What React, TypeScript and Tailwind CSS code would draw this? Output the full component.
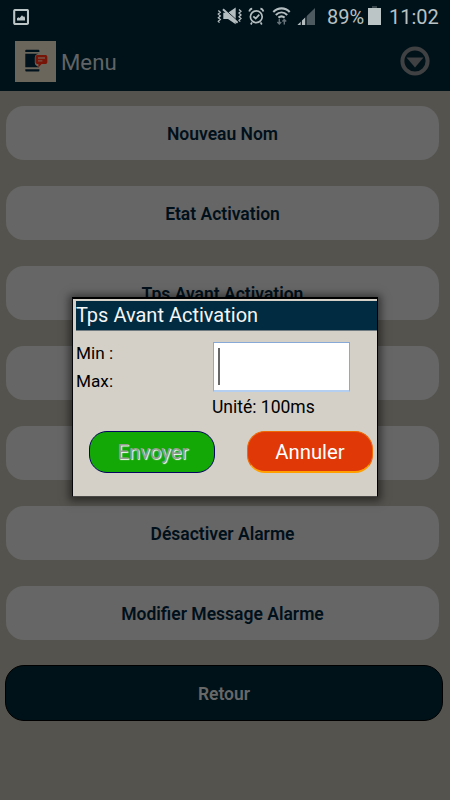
const menuItems = [
  "Nouveau Nom",
  "Etat Activation",
  "Tps Avant Activation",
  "",
  "",
  "Désactiver Alarme",
  "Modifier Message Alarme",
];

function PictureIcon() {
  return (
    <svg className="h-[17px] w-4" viewBox="0 0 16 17" fill="none">
      <rect x="1.2" y="1" width="13.8" height="14" rx="1" stroke="#bcc5c6" strokeWidth="2.1" />
      <path d="M4 11.500V9.300l1.400-1 1.200.8L9 6.300l1.300 1.500.9-.5.8 1.500v2.700z" fill="#bcc5c6" />
    </svg>
  );
}

function StatusIcons() {
  return (
    <svg className="h-[26px] w-[98px]" viewBox="217 4 98 26" fill="none">
      {/* vibrate / mute */}
      <g stroke="#b4bdbf" strokeWidth="1.3">
        <path d="M218.3 10.500l2 1.800-2 1.800 2 1.800-2 1.800 2 1.800-2 1.800 1.200 1.300" />
        <path d="M239 9.500l2 1.800-2 1.800 2 1.800-2 1.800 2 1.800-2 1.800 1.200 1.300" />
      </g>
      <path d="M223.300 12.800h4.700l7.700-5.200V24.200l-7.700-5.200h-4.700z" fill="#b4bdbf" />
      <path d="M224.200 8.700l14 12.800" stroke="#00121a" strokeWidth="1" />
      <path d="M223 9.300l14.600 13.400" stroke="#b4bdbf" strokeWidth="2" />
      {/* alarm */}
      <g stroke="#b4bdbf" strokeWidth="1.7">
        <circle cx="256.3" cy="16.800" r="5.900" />
        <path d="M253.300 16.300l2.400 2.200 3.600-3.800M249.200 11.500c.4-1.700 1.400-2.700 3-2.900M263.400 11.500c-.4-1.700-1.400-2.700-3-2.900M252 22.300l-1.200 2.200M260.600 22.300l1.200 2.200" />
      </g>
      {/* wifi */}
      <g stroke="#b4bdbf" strokeWidth="2.100">
        <path d="M273.300 12c4.800-4.800 11.800-4.800 16.400 0" />
        <path d="M275.800 14.900c3.400-3.200 8-3.200 11.400 0" />
        <path d="M278.400 17.600c1.900-1.600 4.300-1.600 6.200 0" />
      </g>
      <path d="M279.300 19v5m-1.900-2l1.900 2 1.900-2M284.300 24.500v-5m-1.900 2l1.900-2 1.900 2" stroke="#667277" strokeWidth="1.400" />
      {/* signal */}
      <path d="M297.500 25L315 8v17z" fill="#4d5a60" />
      <path d="M297.500 25l7.700-7.500V25z" fill="#b4bdbf" />
      <path d="M301.300 19v6M306 14v11" stroke="#00121a" strokeWidth="1.200" />
    </svg>
  );
}

function AppLogo() {
  return (
    <svg className="h-[41px] w-[41px]" viewBox="0 0 41 41">
      <rect width="41" height="41" fill="#6a665c" />
      <path d="M10.300 11V9.700q0-.9.9-.9h12.300q.9 0 .9.9V11z" fill="#00121b" />
      <path d="M10.300 12.800h13.200q-3.700.6-3.700 4v5q0 3 4.300 4.400H10.300z" fill="#00121b" />
      <path d="M10.300 28.200h14.100v1.300q0 1-.9 1H11.200q-.9 0-.9-1z" fill="#00121b" />
      <path
        d="M22.300 14h8.200q1.800 0 1.800 1.800v5.400q0 1.800-1.800 1.800h-3.900l-3.200 3.400V23h-1.100q-1.800 0-1.800-1.800v-5.400q0-1.800 1.800-1.800z"
        fill="#761508"
      />
      <path d="M23 17h7M23 19.900h4.400" stroke="#75564b" strokeWidth="1.400" />
    </svg>
  );
}

function StatusBar() {
  return (
    <div className="flex h-[34px] items-center pl-[13px] text-[20px] leading-none text-[#b8c1c3]">
      <div className="grow">
        <PictureIcon />
      </div>
      <StatusIcons />
      <span className="ml-3 w-[36px] whitespace-nowrap">89%</span>
      <svg className="ml-[5px] h-5 w-[13px] -translate-y-px" viewBox="0 0 13 20">
        <path d="M4 0h5v2H4z" fill="#39464b" />
        <path d="M0 2h13v17H0z" fill="#bcc5c6" />
      </svg>
      <span className="ml-[8px] w-[61px]">11:02</span>
    </div>
  );
}

function TitleBar() {
  return (
    <div className="flex h-[57px] items-center pb-[3px] pl-[15px] pr-5">
      <AppLogo />
      <h1 className="ml-[5px] grow pt-1 text-[22.2px] text-[#606466]">Menu</h1>
      <svg className="h-[30px] w-[30px]" viewBox="0 0 30 30">
        <circle cx="15" cy="15" r="12.600" fill="none" stroke="#3f4142" strokeWidth="4" />
        <path d="M6.500 11.500h17l-8.500 10z" fill="#3f4142" />
      </svg>
    </div>
  );
}

function Dialog() {
  return (
    <div className="absolute left-[72px] top-[297px] h-[200px] w-[306px] border border-t-2 border-b-[#4a4947] border-l-[#08080a] border-r-black border-t-black bg-[#d4d0c8] pl-[3px] pt-[2px] shadow-[0_1px_8px_3px_rgba(0,0,0,0.5)]">
      <div className="flex h-[30px] items-center border-b border-[#6f7b80] bg-[#002b40] pb-[2px] text-[20px] text-[#f4f5f5]">
        Tps Avant Activation
      </div>
      <div className="flex h-[87px] text-[17.5px] text-black">
        <div className="w-[137px] pt-[8px] text-[17.2px] leading-[28px]">
          <p>Min :</p>
          <p>Max:</p>
        </div>
        <div className="pt-[11px]">
          <div className="h-[50px] w-[137px] border border-b-2 border-[#86a9d8] border-b-[#b5cff1] bg-white pl-[4px] pt-[5px]">
            <div className="h-[37px] w-[2px] bg-[#686868]" />
          </div>
          <p className="-ml-px leading-[30px]">Unité: 100ms</p>
        </div>
      </div>
      <div className="flex gap-8 pl-[13px] pt-[13px] text-[20.3px]">
        <button className="h-[42px] w-[126px] rounded-[18px] border border-[#05055f] bg-[#13a805] pl-0.5 pt-px text-[#969c95] [text-shadow:1px_1px_1px_#ffffff]">
          Envoyer
        </button>
        <button className="h-[42px] w-[126px] rounded-[18px] border border-b-2 border-[#ef6a05] border-b-[#ffa000] bg-[#e03807] pt-px text-white">
          Annuler
        </button>
      </div>
    </div>
  );
}

export default function App() {
  return (
    <main className="relative h-[800px] w-[450px] overflow-hidden bg-[#55534e] font-['Roboto',sans-serif]">
      <header className="h-[91px] bg-[#001219]">
        <StatusBar />
        <TitleBar />
      </header>

      <nav className="flex flex-col gap-[26px] pl-1.5 pt-[15px] text-[17.5px] font-semibold">
        {menuItems.map((item, i) => (
          <button key={i} className="h-[54px] w-[433px] rounded-[18px] bg-[#666666] pt-[3px] text-[#00101b]">
            {item}
          </button>
        ))}
        <button className="-ml-px -mt-px h-[56px] w-[438px] rounded-[19px] border border-black bg-[#001219] pt-[3px] text-[#686868]">
          Retour
        </button>
      </nav>

      <Dialog />
    </main>
  );
}
